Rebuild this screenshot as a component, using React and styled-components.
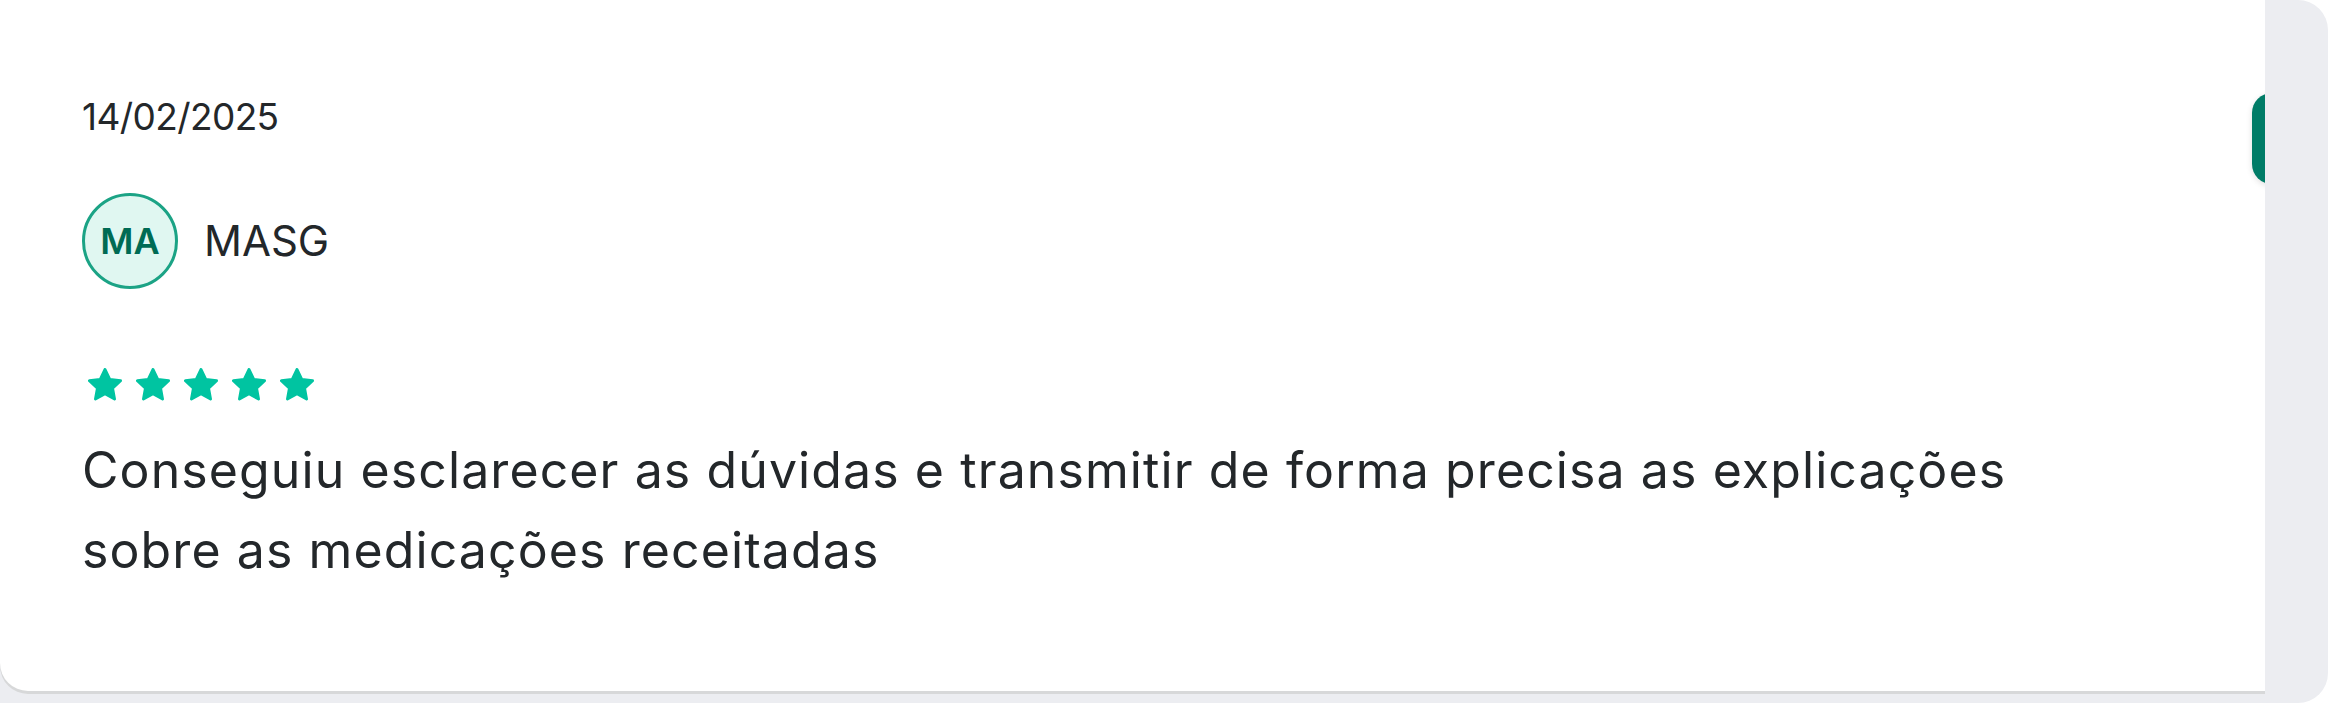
import React from 'react';
import styled, {createGlobalStyle} from 'styled-components';

const GlobalStyle = createGlobalStyle`
  html, body {
    margin: 0;
    padding: 0;
    background: #ffffff;
  }
  body {
    font-family: Inter, "Noto Sans", sans-serif;
    color: #23272a;
  }
`

const Frame = styled.div`
  width: 2328px;
  height: 703px;
  display: flex;
  background: #ecedf1;
  border-radius: 0 30px 30px 0;
  overflow: hidden;
`

const Viewport = styled.div`
  position: relative;
  width: 2265px;
  height: 694px;
  flex-shrink: 0;
  overflow: hidden;
`

const Card = styled.div`
  box-sizing: border-box;
  width: 2265px;
  height: 691px;
  background: #ffffff;
  border-radius: 0 0 0 28px;
  box-shadow: 0 3px 0 #d7d8d9;
  padding: 94px 82px 0 82px;
  display: flex;
  flex-direction: column;
`

const DateText = styled.div`
  font-size: 37px;
  line-height: 46px;
  font-weight: 400;
  letter-spacing: -0.6px;
`

const Author = styled.div`
  display: flex;
  align-items: center;
  gap: 26px;
  margin-top: 53px;
`

const Avatar = styled.div`
  box-sizing: border-box;
  width: 96px;
  height: 96px;
  border-radius: 50%;
  border: 3px solid #1ba385;
  background: #e0f7f1;
  color: #006b54;
  font-size: 36px;
  font-weight: 600;
  display: flex;
  align-items: center;
  justify-content: center;
`

const Name = styled.div`
  font-size: 42px;
  line-height: 50px;
`

const Stars = styled.div`
  display: flex;
  gap: 14px;
  margin-top: 79px;
  padding-left: 6px;
`

const Comment = styled.p`
  margin: 28px 0 0 0;
  max-width: 2010px;
  font-size: 50px;
  line-height: 80px;
  letter-spacing: 1.1px;
`

const NextTab = styled.div`
  position: absolute;
  left: 2252px;
  top: 93px;
  width: 60px;
  height: 91px;
  border-radius: 20px;
  background: #007c67;
  box-shadow: 0 2px 6px rgba(0, 0, 0, 0.12);
`

const Star = () => (
    <svg width="34" height="34" viewBox="2.4 2 19.2 19.2">
        <path
            d="M12 2.8l2.7 5.6 6.1.8-4.5 4.2 1.1 6.1L12 16.6l-5.4 2.9 1.1-6.1-4.5-4.2 6.1-.8z"
            fill="#00c4a1" stroke="#00c4a1" strokeWidth="1.6" strokeLinejoin="round"/>
    </svg>
)

const App = () => {
    const rating = 5

    return (
        <>
            <GlobalStyle/>
            <Frame>
                <Viewport>
                    <Card>
                        <DateText>14/02/2025</DateText>
                        <Author>
                            <Avatar>MA</Avatar>
                            <Name>MASG</Name>
                        </Author>
                        <Stars>
                            {Array.from({length: rating}).map((_, i) => <Star key={i}/>)}
                        </Stars>
                        <Comment>
                            Conseguiu esclarecer as dúvidas e transmitir de forma precisa as explicações sobre as
                            medicações receitadas
                        </Comment>
                    </Card>
                    <NextTab/>
                </Viewport>
            </Frame>
        </>
    );
}

export default App;
